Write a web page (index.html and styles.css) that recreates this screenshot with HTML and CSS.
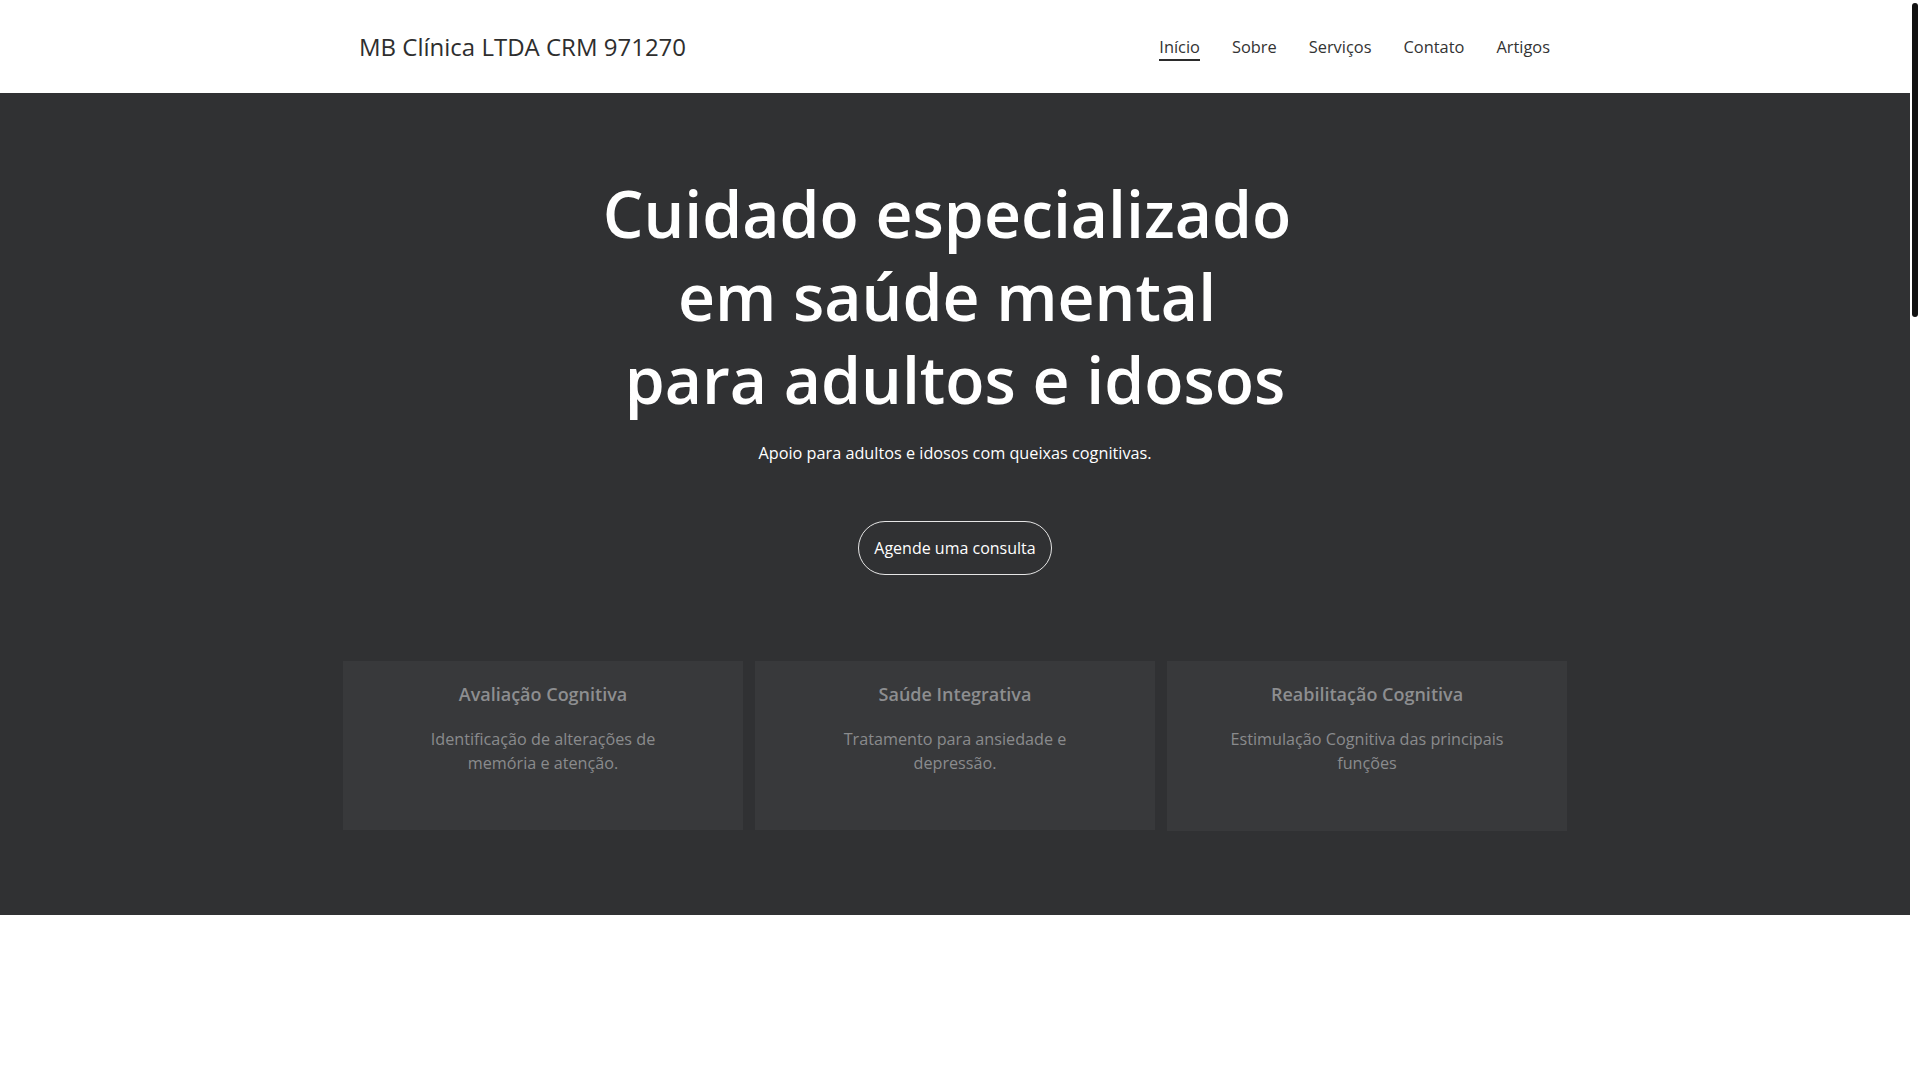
FILE: index.html
```html
<!DOCTYPE html>
<html lang="pt-BR">
<head>
<meta charset="utf-8">
<title>MB Clínica LTDA CRM 971270</title>
<link rel="stylesheet" href="styles.css">
</head>
<body>
<div class="page">
  <header class="site-header">
    <div class="container header-inner">
      <a class="logo" href="#">MB Clínica LTDA CRM 971270</a>
      <nav class="main-nav">
        <a class="nav-link active" href="#">Início</a>
        <a class="nav-link" href="#">Sobre</a>
        <a class="nav-link" href="#">Serviços</a>
        <a class="nav-link" href="#">Contato</a>
        <a class="nav-link" href="#">Artigos</a>
      </nav>
    </div>
  </header>
  <section class="hero">
    <div class="container hero-inner">
      <h1 class="hero-title"><span class="line-trail">Cuidado especializado</span><br><span class="line-trail">em saúde mental</span><br>para adultos e idosos</h1>
      <p class="hero-sub">Apoio para adultos e idosos com queixas cognitivas.</p>
      <a class="btn-outline" href="#">Agende uma consulta</a>
      <div class="cards">
        <div class="card">
          <h3 class="card-title">Avaliação Cognitiva</h3>
          <p class="card-text">Identificação de alterações de memória e atenção.</p>
        </div>
        <div class="card">
          <h3 class="card-title">Saúde Integrativa</h3>
          <p class="card-text">Tratamento para ansiedade e depressão.</p>
        </div>
        <div class="card card-tall">
          <h3 class="card-title">Reabilitação Cognitiva</h3>
          <p class="card-text">Estimulação Cognitiva das principais funções</p>
        </div>
      </div>
    </div>
  </section>
  <section class="page-rest"></section>
</div>
<div class="scroll-rail" aria-hidden="true"><div class="scroll-thumb"></div></div>
</body>
</html>
```
FILE: styles.css
```css
html,
body {
  margin: 0;
  background: #ffffff;
}
body {
  display: flex;
  align-items: flex-start;
  font-family: "Open Sans", "Noto Sans", "Liberation Sans", sans-serif;
  color: #2b2b2b;
}
.page {
  flex: 1 1 auto;
  min-width: 0;
  background: #ffffff;
}
.scroll-rail {
  flex: 0 0 10px;
  width: 10px;
  background: #ffffff;
  padding-top: 3px;
}
.scroll-thumb {
  width: 6px;
  height: 314px;
  margin-left: 2px;
  background: #111111;
  border-radius: 3px;
}
.container {
  width: 1224px;
  margin: 0 auto;
  box-sizing: border-box;
}
.site-header {
  background: #ffffff;
  height: 93px;
}
.header-inner {
  height: 93px;
  padding: 0 17px 0 16px;
  display: flex;
  align-items: center;
  justify-content: space-between;
}
.logo {
  font-size: 24px;
  line-height: 32px;
  color: #2e2e2e;
  text-decoration: none;
}
.main-nav {
  display: flex;
  gap: 32px;
  padding-top: 2px;
}
.nav-link {
  font-size: 16.4px;
  line-height: 24px;
  color: #333333;
  text-decoration: none;
  border-bottom: 2px solid transparent;
}
.nav-link.active {
  border-bottom-color: #2b2b2b;
}
.hero {
  background: #303133;
  padding: 79px 0 84px;
}
.hero-inner {
  display: flex;
  flex-direction: column;
  align-items: center;
  text-align: center;
}
.hero-title {
  margin: 0;
  font-size: 64.3px;
  line-height: 83px;
  font-weight: 600;
  color: #ffffff;
}
.line-trail {
  padding-right: 16px;
}
.hero-sub {
  margin: 20px 0 0;
  font-size: 16.25px;
  line-height: 24px;
  color: #ffffff;
}
.btn-outline {
  margin-top: 56px;
  display: inline-block;
  padding: 14px 15px;
  font-size: 16px;
  line-height: 24px;
  color: #ffffff;
  text-decoration: none;
  border: 1px solid #e6e6e6;
  border-radius: 28px;
}
.cards {
  margin-top: 86px;
  width: 100%;
  display: grid;
  grid-template-columns: repeat(3, 1fr);
  gap: 12px;
  align-items: start;
}
.card {
  background: #38393b;
  height: 169px;
  box-sizing: border-box;
  padding: 20px 20px 0;
}
.card-tall {
  height: 170px;
}
.card-title {
  margin: 0;
  font-size: 18px;
  line-height: 27px;
  font-weight: 600;
  color: #8d8e90;
}
.card-text {
  margin: 19px auto 0;
  max-width: 285px;
  font-size: 16.2px;
  line-height: 24px;
  color: #8a8b8d;
}
.page-rest {
  height: 2800px;
  background: #ffffff;
}
```
